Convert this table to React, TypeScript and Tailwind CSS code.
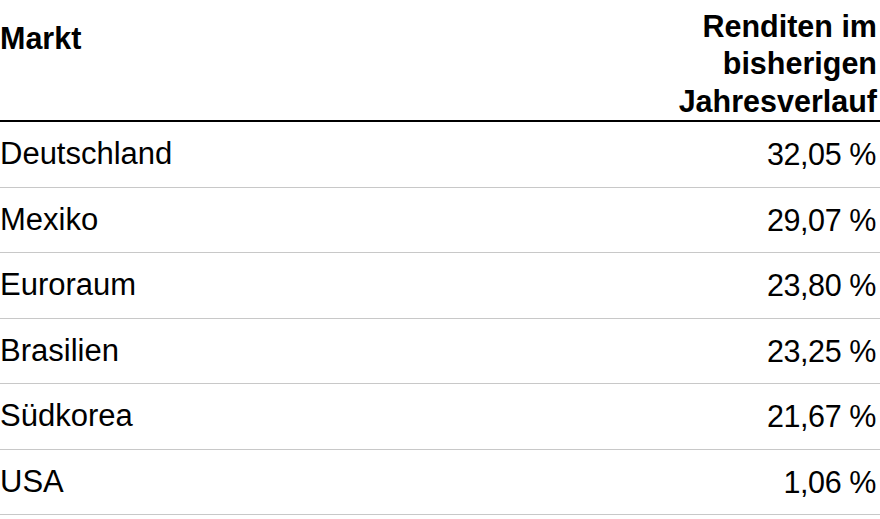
import React from "react";

const rows = [
  { market: "Deutschland", value: "32,05 %" },
  { market: "Mexiko", value: "29,07 %" },
  { market: "Euroraum", value: "23,80 %" },
  { market: "Brasilien", value: "23,25 %" },
  { market: "Südkorea", value: "21,67 %" },
  { market: "USA", value: "1,06 %" },
];

export default function App() {
  return (
    <div className="w-[880px] h-[519px] bg-white text-black font-['Liberation_Sans',Arial,sans-serif]">
      <div className="flex justify-between h-[122px] border-b-2 border-black text-[30.5px] font-bold leading-[37.5px]">
        <div className="pt-[20px]">Markt</div>
        <div className="self-end text-right pr-[3px]">
          Renditen im
          <br />
          bisherigen
          <br />
          Jahresverlauf
        </div>
      </div>
      {rows.map((r) => (
        <div
          key={r.market}
          className="flex items-center justify-between h-[65.5px] border-b border-[#c8c8c8] text-[31px] leading-[36px]"
        >
          <span>{r.market}</span>
          <span className="pr-[4px] text-[30.5px] tracking-[-0.4px]">{r.value}</span>
        </div>
      ))}
    </div>
  );
}
